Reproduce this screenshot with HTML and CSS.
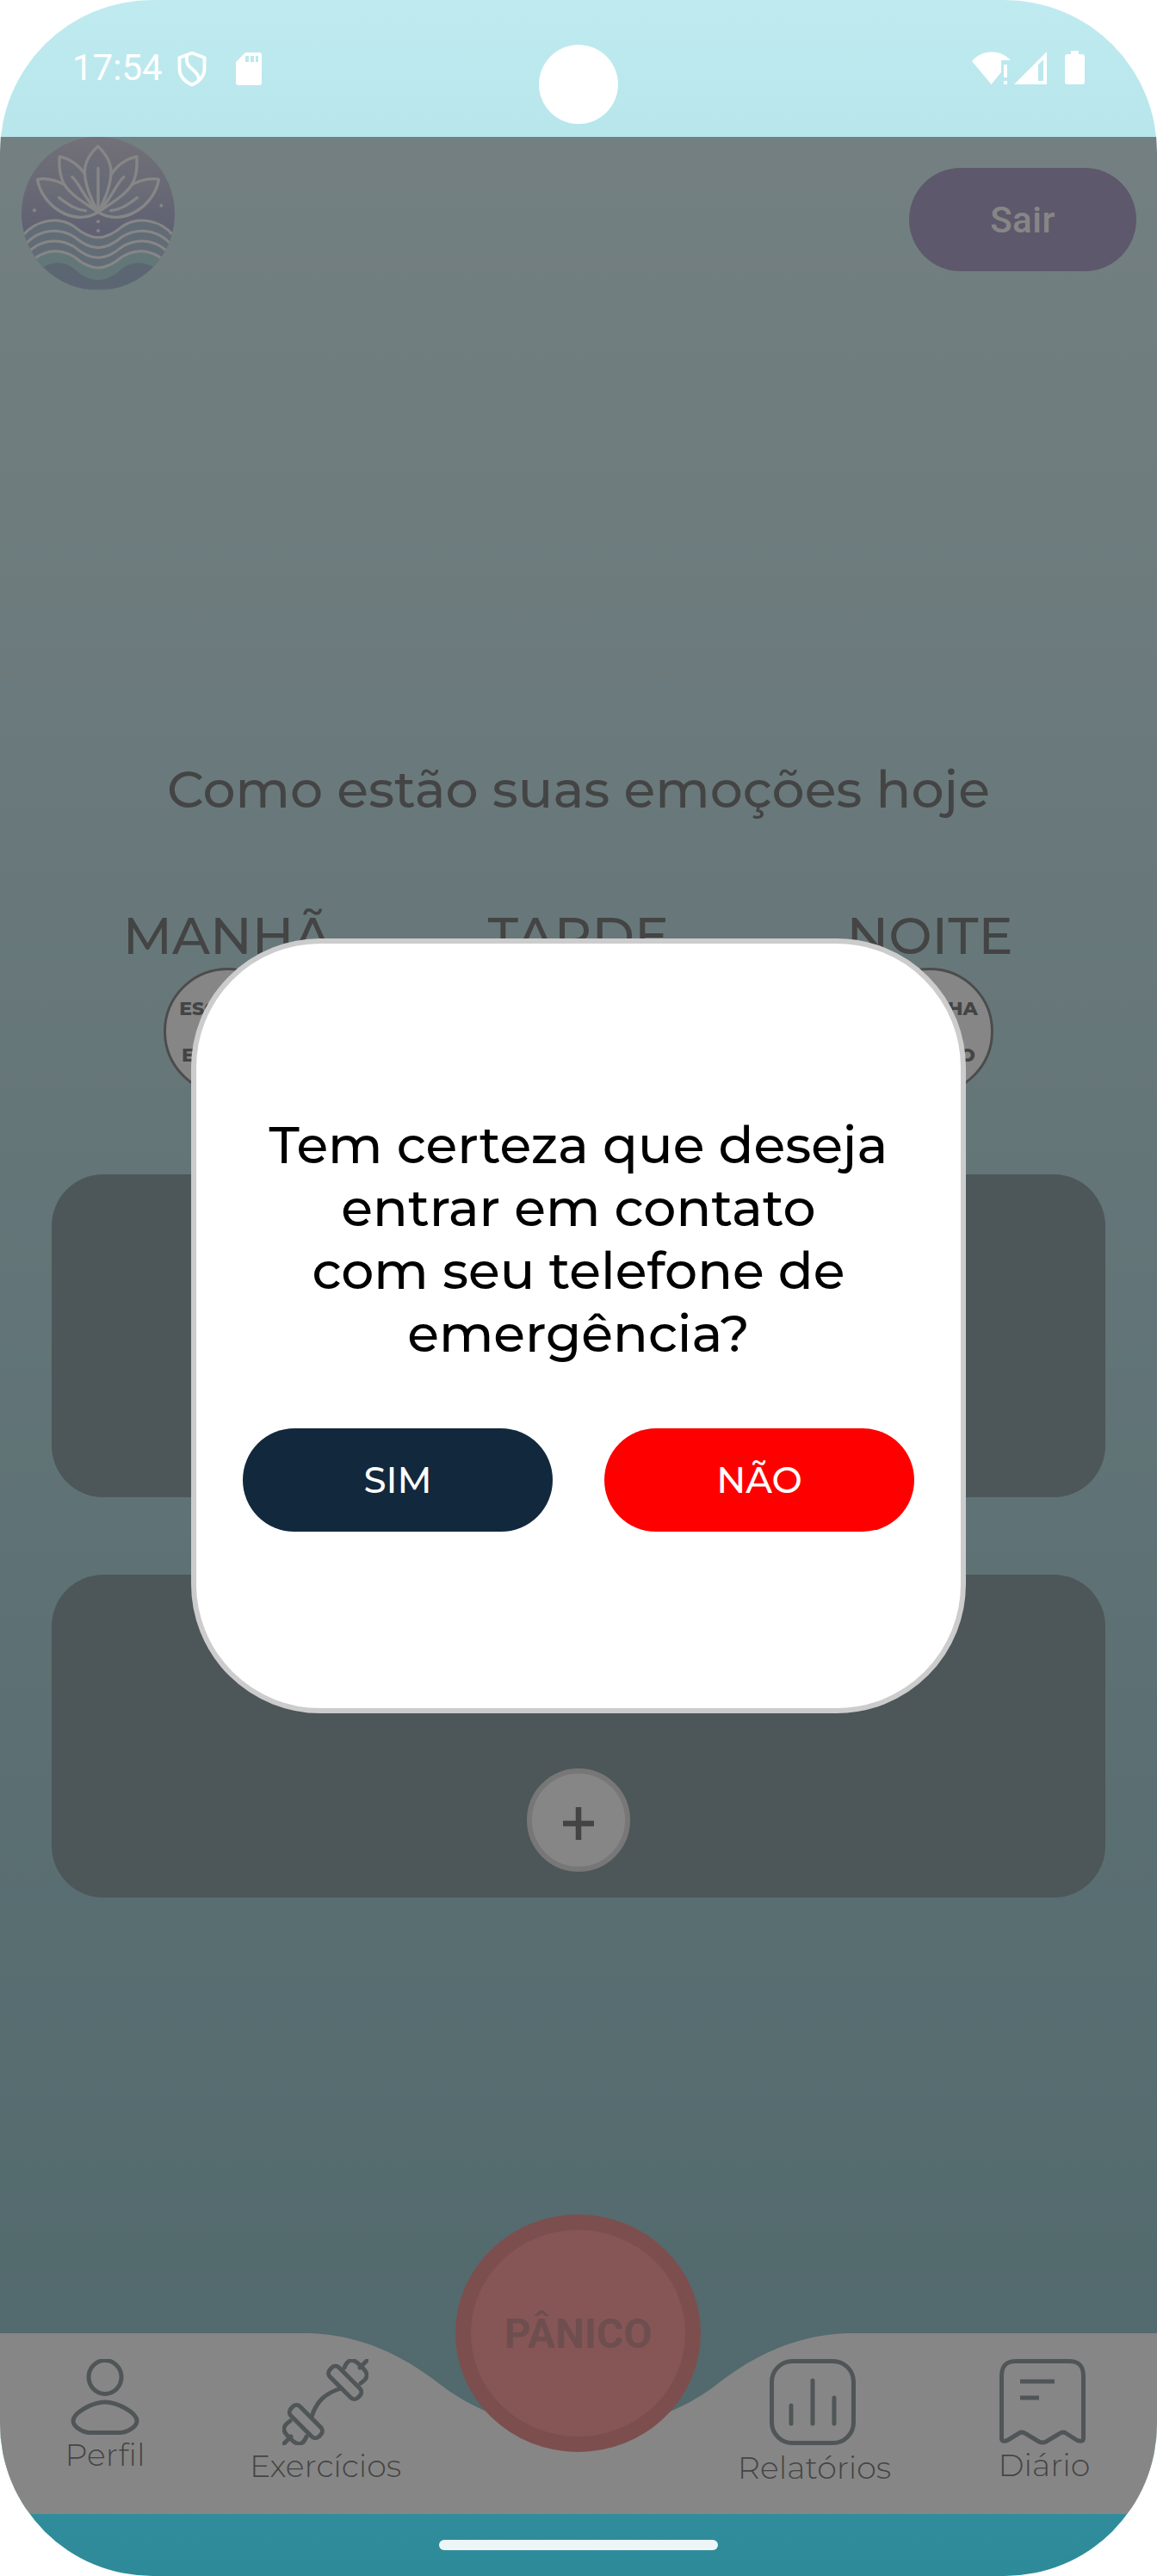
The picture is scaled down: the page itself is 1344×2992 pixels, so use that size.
FILE: index.html
```html
<!DOCTYPE html>
<html lang="pt-BR">
<head>
<meta charset="utf-8">
<title>Emoções</title>
<link rel="stylesheet" href="styles.css">
</head>
<body>
<div class="phone">
  <div class="status">
    <span class="clock">17:54</span>
    <svg class="st-shield" viewBox="0 0 34 42" fill="none" stroke="#fff" stroke-width="4" stroke-linejoin="round"><path d="M17 2.5 31.5 8v13c0 8-6 15-14.500 18.500C8.500 36 2.500 29 2.500 21V8Z"/><path d="M11 6c-1 8 1 11 6 15s9 8 8 14"/></svg>
    <svg class="st-card" viewBox="0 0 30 38"><path fill="#fff" fill-rule="evenodd" d="M11 0h16a3 3 0 0 1 3 3v32a3 3 0 0 1-3 3H3a3 3 0 0 1-3-3V11ZM11 4v7h4V4Zm6 0v7h4V4Zm6 0v7h3V4Z"/></svg>
    <span class="camera"></span>
    <svg class="st-wifi" viewBox="0 0 44 38" fill="#fff"><path d="M0 11C12-3 32-3 44 9v1H34v14L22.500 38Z"/><path d="M37 15h4v15h-4zM37 34h4v4h-4z"/></svg>
    <svg class="st-signal" viewBox="0 0 38 38"><path fill="#fff" fill-rule="evenodd" d="M38 0v38H0ZM34 9l-6 6v19h6Z"/></svg>
    <svg class="st-battery" viewBox="0 0 23 39"><path fill="#fff" d="M7 0h9v4h4a3 3 0 0 1 3 3v29a3 3 0 0 1-3 3H3a3 3 0 0 1-3-3V7a3 3 0 0 1 3-3h4Z"/></svg>
  </div>

  <div class="app">
    <header class="top">
      <svg class="logo" viewBox="75 478 536 536">
        <defs>
          <linearGradient id="sky" x1="0" y1="0" x2="0" y2="1"><stop offset="0" stop-color="#b4acca"/><stop offset=".3" stop-color="#8f94c0"/><stop offset=".6" stop-color="#6e73b4"/><stop offset="1" stop-color="#5e84b4"/></linearGradient>
          <linearGradient id="petal" x1="0" y1="0" x2="0" y2="1"><stop offset="0" stop-color="#a0a0c4"/><stop offset="1" stop-color="#7890c0"/></linearGradient>
          <clipPath id="disc"><circle cx="343" cy="746" r="268"/></clipPath>
        </defs>
        <g clip-path="url(#disc)">
          <rect x="75" y="478" width="536" height="536" fill="url(#sky)"/>
          <path fill="#749cc0" d="M75 828C125 765 205 755 260 792c60 50 106 50 166 0 55-37 135-27 185 36v190H75Z"/>
          <path fill="#7ac4cc" d="M75 960C125 868 205 863 260 898c60 50 106 50 166 0 55-35 135-30 185 62v60H75Z"/>
          <path fill="#5c84b0" d="M75 1010C130 925 200 895 258 938c60 54 110 54 170 0 58-43 128-13 183 72Z"/>
          <g fill="none" stroke="#fff" stroke-width="9">
            <path d="M75 828C125 765 205 755 260 792c60 50 106 50 166 0 55-37 135-27 185 36"/>
            <path d="M75 871C125 798 205 793 260 828c60 50 106 50 166 0 55-35 135-30 185 43"/>
            <path d="M75 912C125 833 205 828 260 863c60 50 106 50 166 0 55-35 135-30 185 49"/>
            <path d="M75 960C125 868 205 863 260 898c60 50 106 50 166 0 55-35 135-30 185 62"/>
          </g>
        </g>
        <g fill="url(#petal)" stroke="#fff" stroke-width="10" stroke-linejoin="round" stroke-linecap="round">
          <path d="M343 741C310 690 200 610 131 627c12 85 122 170 212 114Z"/>
          <path d="M343 741c33-51 143-131 212-114-12 85-122 170-212 114Z"/>
          <path d="M343 741C325 640 290 565 208 547c-7 104 30 124 135 194Z"/>
          <path d="M343 741c18-101 53-176 135-194 7 104-30 124-135 194Z"/>
          <path d="M343 741C315 690 296 640 296 600c0-40 28-74 46-89 18 15 46 49 46 89 0 40-17 90-45 141Z"/>
          <path fill="none" d="M343 588v153M252 618c25 20 45 80 91 123M433 618c-25 20-45 80-90 123M206 691c30 20 55 42 93 45M480 691c-30 20-55 42-93 45"/>
        </g>
        <g fill="#fff"><circle cx="343" cy="774" r="6"/><circle cx="343" cy="806" r="6"/><circle cx="120" cy="735" r="6"/><circle cx="564" cy="718" r="6"/></g>
      </svg>
      <button class="logout">Sair</button>
    </header>

    <main class="content">
      <h1 class="question">Como estão suas emoções hoje</h1>
      <section class="periods">
        <div class="period"><h2>MANHÃ</h2><div class="choice"><span>ESCOLHA</span><span>EMOÇÃO</span></div></div>
        <div class="period"><h2>TARDE</h2><div class="choice"><span>ESCOLHA</span><span>EMOÇÃO</span></div></div>
        <div class="period"><h2>NOITE</h2><div class="choice"><span>ESCOLHA</span><span>EMOÇÃO</span></div></div>
      </section>
      <section class="card"></section>
      <section class="card"><button class="add"><svg viewBox="0 0 36 38"><path d="M18 0v38M0 19h36" stroke="#000" stroke-width="6.500"/></svg></button></section>
    </main>

    <nav class="nav">
      <svg class="nav-bg" viewBox="0 0 1344 210"><path fill="#fff" d="M0 0H352C420 0 470 28 508 57c42 33 92 53 164 53s122-20 164-53C874 28 924 0 992 0h352v210H0Z"/></svg>
      <div class="item perfil">
        <svg viewBox="0 0 80 88"><ellipse cx="40" cy="21" rx="19" ry="19.500"/><path d="M40 50c14 0 37 12 37 22 0 7-12 13.500-20 13.500H23C15 85.500 3 79 3 72c0-10 23-22 37-22Z"/></svg>
        <span>Perfil</span>
      </div>
      <div class="item exercicios">
        <svg viewBox="0 0 100 100"><path d="M34 67C40 48 50 40 68 34"/><g><rect x="-8" y="-23" width="15" height="46" rx="6" transform="translate(73 27) rotate(-45)"/><path d="M72 10c4-10 10-11 17-4l5 5c6 6 6 11-3 17M90 10l9-9"/></g><g transform="rotate(180 50 50)"><rect x="-8" y="-23" width="15" height="46" rx="6" transform="translate(73 27) rotate(-45)"/><path d="M72 10c4-10 10-11 17-4l5 5c6 6 6 11-3 17M90 10l9-9"/></g></svg>
        <span>Exercícios</span>
      </div>
      <button class="panic">PÂNICO</button>
      <div class="item relatorios">
        <svg viewBox="0 0 100 100"><rect x="2.500" y="2.500" width="95" height="95" rx="24"/><path d="M25 54v21M50 25v50M75 45v30"/></svg>
        <span>Relatórios</span>
      </div>
      <div class="item diario">
        <svg viewBox="0 0 100 100"><path d="M2.500 92V20c0-12 5-17.500 17-17.500h61c12 0 17 5.500 17 17.500v72c0 4-4 4-8 2L77 86c-3-2-5-1-8 1L54 96q-4 2-8 0L31 87c-3-2-5-3-8-1L10 94c-4 2-7.500 2-7.500-2Z"/><path stroke-linecap="butt" d="M24 26h40M24 45h22"/></svg>
        <span>Diário</span>
      </div>
    </nav>

    <div class="scrim">
      <div class="dialog">
        <p class="message">Tem certeza que deseja<br>entrar em contato<br>com seu telefone de<br>emergência?</p>
        <div class="actions"><button class="yes">SIM</button><button class="no">NÃO</button></div>
      </div>
    </div>
  </div>

  <div class="gesture"><span></span></div>
</div>
</body>
</html>
```
FILE: styles.css
```css
* { box-sizing: border-box; }
body { margin: 0; background: #fff; font-family: Montserrat, Inter, sans-serif; }
button { border: 0; padding: 0; font: inherit; }
h1, h2, p { margin: 0; font-weight: 500; }

.phone {
  width: 1344px; height: 2992px;
  display: flex; flex-direction: column;
  overflow: hidden; border-radius: 177px;
  background: linear-gradient(#bfebf0, #2d8a99);
}

.status { height: 159px; display: flex; align-items: flex-start; padding: 52px 84px 0 84px; font-family: Roboto, sans-serif; color: #fff; }
.status svg { display: block; flex: none; }
.clock { width: 122px; height: 54px; margin-top: 2px; font-size: 42px; line-height: 50px; }
.st-shield { width: 34px; height: 42px; margin-top: 7px; }
.st-card { width: 30px; height: 38px; margin: 9px 0 0 34px; }
.camera { width: 92px; height: 92px; margin-left: 322px; border-radius: 50%; background: #fff; }
.st-wifi { width: 44px; height: 38px; margin: 8px 0 0 411px; }
.st-signal { width: 38px; height: 38px; margin: 8px 0 0 5px; }
.st-battery { width: 23px; height: 39px; margin: 7px 0 0 21px; }

.app { position: relative; height: 2761px; display: flex; flex-direction: column; }
.top { height: 178px; display: flex; justify-content: space-between; align-items: center; padding: 0 24px 0 25px; }
.logo { width: 178px; height: 178px; }
.logout { width: 264px; height: 120px; margin-top: 14px; border-radius: 60px; background: #624e9c; color: #fff; font: 500 42px/122px Roboto, sans-serif; letter-spacing: .5px; }

.content { flex: 1; display: flex; flex-direction: column; align-items: center; padding-top: 540px; }
.question { height: 170px; font-size: 60px; line-height: 80px; white-space: nowrap; }
.periods { display: flex; gap: 260px; height: 317px; }
.period { width: 148px; display: flex; flex-direction: column; align-items: center; }
.period h2 { height: 77px; font-size: 60px; line-height: 80px; white-space: nowrap; }
.choice { flex: none; width: 148px; height: 148px; border: 3px solid #222; border-radius: 50%; background: #fff; display: flex; flex-direction: column; align-items: center; justify-content: center; gap: 28px; padding-top: 1px; font-size: 22px; line-height: 26px; font-weight: 800; }
.card { width: 1224px; height: 375px; margin-bottom: 90px; border-radius: 60px; background: #24464e; display: flex; justify-content: center; padding-top: 225px; }
.add { width: 120px; height: 120px; border: 6px solid #c4c4c4; border-radius: 50%; background: #fff; display: flex; align-items: center; justify-content: center; padding-top: 8px; }
.add svg { width: 36px; height: 38px; }

.nav { position: relative; height: 210px; display: flex; align-items: flex-start; }
.nav-bg { position: absolute; inset: 0; width: 1344px; height: 210px; }
.item { position: relative; flex: none; display: flex; flex-direction: column; align-items: center; padding-top: 30px; font-size: 36.4px; line-height: 44px; font-weight: 300; }
.item svg { width: 100px; height: 100px; fill: none; stroke: #30444c; stroke-width: 5; stroke-linecap: round; stroke-linejoin: round; }
.item span { margin-top: 1px; white-space: nowrap; }
.perfil { width: 244px; }
.perfil svg { width: 80px; height: 88px; }
.exercicios { width: 268px; }
.exercicios span { margin-top: 2px; }
.relatorios { width: 260px; }
.relatorios span { margin: 4px 0 0 4px; }
.diario { width: 274px; }
.diario span { margin-left: 4px; }
.panic { position: relative; flex: none; width: 285px; height: 276px; margin: -138px 0 0 17px; border: 18px solid #db2a2a; border-radius: 50%; background: #ff4545; color: #a12a2a; font: 700 48px/242px Roboto, sans-serif; }

.scrim { position: absolute; inset: 0; display: flex; align-items: center; justify-content: center; background: rgba(92, 92, 92, .74); }
.dialog { width: 900px; height: 900px; border: 6px solid #ccc; border-radius: 150px; background: #fff; padding: 197px 54px 0; }
.message { text-align: center; font-size: 60px; line-height: 73px; color: #000; white-space: nowrap; }
.actions { display: flex; gap: 60px; margin-top: 74px; }
.actions button { width: 360px; height: 120px; border-radius: 60px; color: #fff; font-size: 42px; font-weight: 500; line-height: 120px; }
.yes { background: #12283d; }
.no { background: #f00; }

.gesture { height: 72px; display: flex; justify-content: center; padding-top: 30px; }
.gesture span { width: 324px; height: 12px; border-radius: 6px; background: #edf5f7; }
```
